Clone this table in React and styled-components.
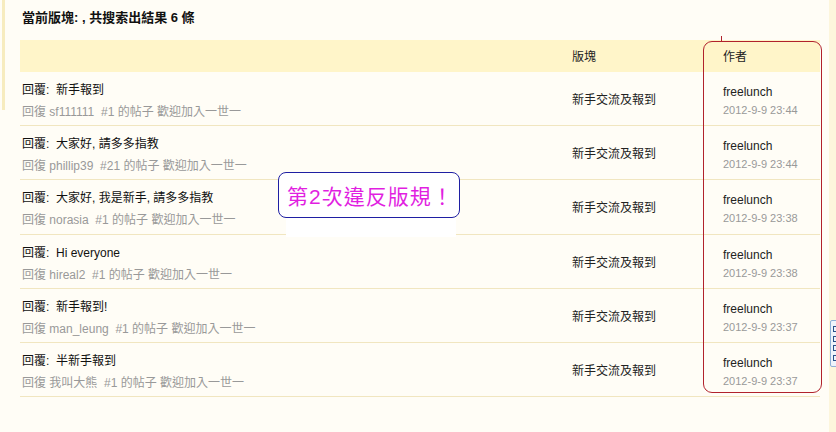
import styled, { createGlobalStyle } from 'styled-components'

const GlobalStyle = createGlobalStyle`
  html, body{
    margin:0;
    padding:0;
    background:#fffdf6;
  }
  body{
    font-family:"Liberation Sans", "Noto Sans CJK TC", sans-serif;
    font-size:12px;
    color:#222;
  }
`

const posts = [
  { title: '新手報到', user: 'sf111111', floor: 1, time: '2012-9-9 23:44' },
  { title: '大家好, 請多多指教', user: 'phillip39', floor: 21, time: '2012-9-9 23:44' },
  { title: '大家好, 我是新手, 請多多指教', user: 'norasia', floor: 1, time: '2012-9-9 23:38' },
  { title: 'Hi everyone', user: 'hireal2', floor: 1, time: '2012-9-9 23:38' },
  { title: '新手報到!', user: 'man_leung', floor: 1, time: '2012-9-9 23:37' },
  { title: '半新手報到', user: '我叫大熊', floor: 1, time: '2012-9-9 23:37' },
]

const App = () => {
  return <>
    <GlobalStyle/>
    <Page>
      <LeftRail/>
      <Main>
        <Heading>當前版塊: , 共搜索出結果 6 條</Heading>
        <Table>
          <HeadRow>
            <Cell></Cell>
            <Cell>版塊</Cell>
            <Cell>作者</Cell>
          </HeadRow>
          {posts.map((p, i) => (
            <Row key={i}>
              <Cell>
                <PostTitle>回覆:&nbsp;&nbsp;{p.title}</PostTitle>
                <PostSub>回復 {p.user} &nbsp;#{p.floor} 的帖子 歡迎加入一世一</PostSub>
              </Cell>
              <ForumCell>新手交流及報到</ForumCell>
              <Cell>
                <Author>freelunch</Author>
                <PostTime>{p.time}</PostTime>
              </Cell>
            </Row>
          ))}
        </Table>
      </Main>
      <RightRail/>

      <Tick/>
      <RedMark/>
      <Warning>
        <Bubble>第2次違反版規！</Bubble>
        <Tail/>
      </Warning>
      <SideTab>
        <Mark $w={6}/>
        <Mark $w={4}/>
        <Mark $w={5}/>
        <Mark $w={6}/>
      </SideTab>
    </Page>
  </>
}

const Page = styled.div`
  position:relative;
  display:flex;
  width:836px;
  height:432px;
  overflow:hidden;
`

const LeftRail = styled.div`
  width:3px;
  height:110px;
  margin-left:2px;
  background:#f7ecbf;
  flex-shrink:0;
`

const RightRail = styled.div`
  width:7px;
  background:#fdf6dc;
  flex-shrink:0;
`

const Main = styled.div`
  flex:1;
  padding:9px 2px 0 15px;
`

const Heading = styled.h2`
  margin:0 0 0 2px;
  font-size:13px;
  line-height:17px;
  font-weight:700;
  color:#111;
`

const Table = styled.div`
  margin-top:14px;
  width:800px;
`

const HeadRow = styled.div`
  display:grid;
  grid-template-columns:550px 151px 99px;
  height:31px;
  padding-bottom:1px;
  align-items:center;
  background:#fff5c9;
  color:#222;
`

const Row = styled.div`
  display:grid;
  grid-template-columns:550px 151px 99px;
  height:53.2px;
  border-bottom:1px solid #f1e6c0;
`

const Cell = styled.div`
  padding:0 0 0 2px;
`

const ForumCell = styled(Cell)`
  display:flex;
  align-items:center;
  color:#222;
`

const PostTitle = styled.div`
  margin-top:9px;
  line-height:18px;
  color:#111;
`

const PostSub = styled.div`
  margin-top:2px;
  line-height:22px;
  color:#999;
`

const Author = styled.div`
  margin-top:11px;
  line-height:18px;
  color:#222;
`

const PostTime = styled.div`
  font-size:11px;
  line-height:18px;
  color:#999;
`

const RedMark = styled.div`
  position:absolute;
  left:703px;
  top:41px;
  width:117px;
  height:350px;
  border:1px solid #b1222c;
  border-radius:9px;
`

const Tick = styled.div`
  position:absolute;
  left:721px;
  top:36px;
  width:1px;
  height:6px;
  background:#b1222c;
`

const Warning = styled.div`
  position:absolute;
  left:278px;
  top:172px;
  width:182px;
`

const Bubble = styled.div`
  height:44px;
  border:1px solid #1f1fa3;
  border-radius:8px;
  background:#fff;
  display:flex;
  align-items:center;
  padding-left:8px;
  font-size:21px;
  letter-spacing:1px;
  white-space:nowrap;
  color:#e11fe1;
`

const Tail = styled.div`
  height:19px;
  margin:0 4px 0 8px;
  background:#fff;
`

const SideTab = styled.div`
  position:absolute;
  left:830px;
  top:320px;
  width:10px;
  height:47px;
  border:1px solid #8fb0d8;
  border-radius:2px;
  background:#eef4fb;
  display:flex;
  flex-direction:column;
  justify-content:space-around;
  padding:3px 0 3px 2px;
  box-sizing:border-box;
`

const Mark = styled.div`
  width:${p => p.$w}px;
  height:6px;
  border:1px solid #2a4f8a;
  border-right:none;
  box-sizing:border-box;
`

export default App
